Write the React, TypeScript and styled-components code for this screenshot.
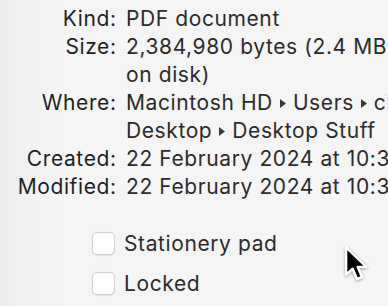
import { createGlobalStyle, styled } from "styled-components"

const GlobalStyle = createGlobalStyle`
    html, body {
        margin: 0;
        padding: 0;
        overflow: hidden;
    }
    body {
        font-family: Inter, "Noto Sans", sans-serif;
        -webkit-font-smoothing: antialiased;
    }
`

const Window = styled.div`
    position: relative;
    width: 388px;
    height: 306px;
    overflow: hidden;
    background: linear-gradient(to right, #ebebeb 0, #f3f3f3 36px, #f5f5f5 60px);
    color: #262626;
    font-size: 21px;
    letter-spacing: 0.6px;
`

const InfoGrid = styled.div`
    display: grid;
    grid-template-columns: 116px max-content;
    column-gap: 10px;
    padding-top: 5px;
    line-height: 28px;
`

const Label = styled.div`
    text-align: right;
    white-space: nowrap;
    color: #1f1f1f;
    margin-right: -0.6px;
`

const Value = styled.div`
    white-space: nowrap;
    color: #2b2b2b;
`

const Line = styled.div`
    display: flex;
    align-items: center;
    gap: 7px;
`

const Arrow = styled.svg`
    width: 6px;
    height: 9px;
    flex-shrink: 0;
    fill: #3a3a3a;
`

const Options = styled.div`
    display: flex;
    flex-direction: column;
    gap: 12px;
    margin-top: 28px;
    padding-left: 92px;
`

const CheckRow = styled.label`
    display: flex;
    align-items: center;
    gap: 9px;
    height: 28px;
    color: #2b2b2b;
    white-space: nowrap;
`

const CheckBox = styled.span`
    width: 21px;
    height: 21px;
    border-radius: 5px;
    background: #ffffff;
    border: 1px solid #d2d2d2;
    box-shadow: 0 0.5px 1px rgba(0, 0, 0, 0.06);
    flex-shrink: 0;
`

const Cursor = styled.svg`
    position: absolute;
    left: 343px;
    top: 245px;
    width: 26px;
    height: 38px;
    filter: drop-shadow(0 1px 1.5px rgba(0, 0, 0, 0.35));
`

const Tri = () => (
    <Arrow viewBox="0 0 6 9">
        <path d="M0 0 L6 4.5 L0 9 Z" />
    </Arrow>
)

type Row = { label: string; lines: React.ReactNode[] }

const rows: Row[] = [
    { label: "Kind:", lines: ["PDF document"] },
    { label: "Size:", lines: ["2,384,980 bytes (2.4 MB", "on disk)"] },
    {
        label: "Where:",
        lines: [
            <>Macintosh HD <Tri /> Users <Tri /> charlie</>,
            <>Desktop <Tri /> Desktop Stuff</>,
        ],
    },
    { label: "Created:", lines: ["22 February 2024 at 10:35"] },
    { label: "Modified:", lines: ["22 February 2024 at 10:35"] },
]

const App = () => {
    return (
        <>
            <GlobalStyle />
            <Window>
                <InfoGrid>
                    {rows.map((row) => (
                        <>
                            <Label key={row.label + "-l"}>{row.label}</Label>
                            <Value key={row.label + "-v"}>
                                {row.lines.map((line, i) => (
                                    <Line key={i}>{line}</Line>
                                ))}
                            </Value>
                        </>
                    ))}
                </InfoGrid>
                <Options>
                    <CheckRow>
                        <CheckBox />
                        Stationery pad
                    </CheckRow>
                    <CheckRow>
                        <CheckBox />
                        Locked
                    </CheckRow>
                </Options>
                <Cursor viewBox="0 0 17 25">
                    <path
                        d="M2 1.5 L2 19.5 L6.3 15.6 L9.2 22.4 L12.4 21 L9.6 14.4 L15.3 14.4 Z"
                        fill="#000"
                        stroke="#fff"
                        strokeWidth="1.6"
                        strokeLinejoin="round"
                    />
                </Cursor>
            </Window>
        </>
    )
}

export default App
